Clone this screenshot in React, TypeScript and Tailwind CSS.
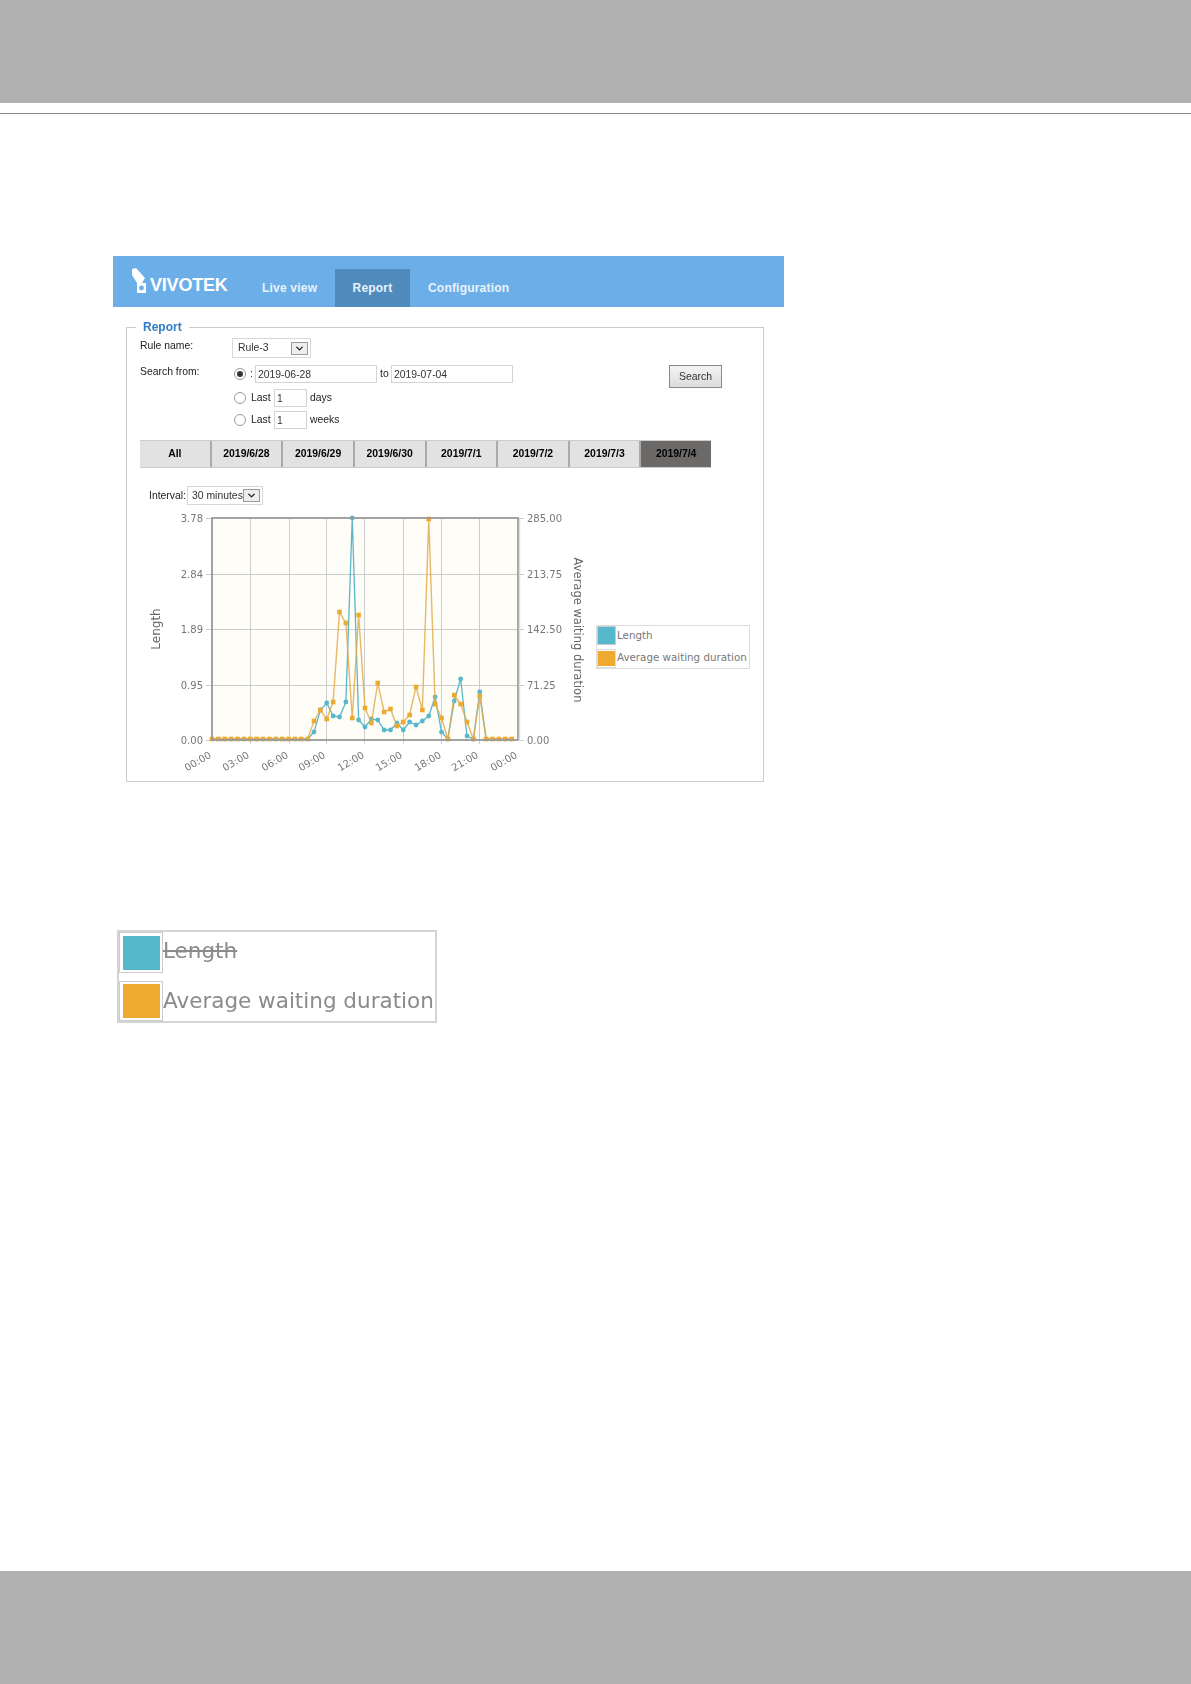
import React from 'react';
import { ChevronDown } from 'lucide-react';

const dates = ['All', '2019/6/28', '2019/6/29', '2019/6/30', '2019/7/1', '2019/7/2', '2019/7/3', '2019/7/4'];
const BASE = 739;

// page y of every half hour sample, index 0 is 00:00
const lengthY: Record<number, number> = {
  16: 732, 17: 710, 18: 703, 19: 716, 20: 717, 21: 702, 22: 518, 23: 720, 24: 727, 25: 719, 26: 720, 27: 730,
  28: 730, 29: 723, 30: 730, 31: 722, 32: 725, 33: 721, 34: 716, 35: 697, 36: 732, 37: 739, 38: 701, 39: 679,
  40: 736, 41: 739, 42: 692,
};
const waitY: Record<number, number> = {
  16: 721, 17: 710, 18: 719, 19: 702, 20: 612, 21: 623, 22: 718, 23: 615, 24: 708, 25: 723, 26: 683, 27: 712,
  28: 709, 29: 726, 30: 722, 31: 715, 32: 687, 33: 710, 34: 519, 35: 704, 36: 718, 37: 739, 38: 695, 39: 704,
  40: 722, 41: 739, 42: 696,
};

const samples = Array.from({ length: 48 }, (_, i) => i);
const px = (i: number) => 212 + i * 6.375;
const toPoints = (ys: Record<number, number>) => samples.map((i) => `${px(i)},${ys[i] ?? BASE}`).join(' ');

const gridX = [250.5, 289.5, 326.5, 364.5, 403.5, 441.5, 479.5];
const gridY = [574.5, 629.5, 685.5];
const leftTicks = [
  { y: 518, t: '3.78' },
  { y: 574, t: '2.84' },
  { y: 629, t: '1.89' },
  { y: 685, t: '0.95' },
  { y: 740, t: '0.00' },
];
const rightTicks = [
  { y: 518, t: '285.00' },
  { y: 574, t: '213.75' },
  { y: 629, t: '142.50' },
  { y: 685, t: '71.25' },
  { y: 740, t: '0.00' },
];
const hours = [
  { x: 212, t: '00:00' },
  { x: 250, t: '03:00' },
  { x: 289, t: '06:00' },
  { x: 326, t: '09:00' },
  { x: 365, t: '12:00' },
  { x: 403, t: '15:00' },
  { x: 442, t: '18:00' },
  { x: 479, t: '21:00' },
  { x: 518, t: '00:00' },
];

function Chart() {
  return (
    <svg width={610} height={272} viewBox="140 505 610 272" className="block">
      <g fontFamily="'DejaVu Sans', sans-serif" fontSize={10} fill="#777">
        <rect x={212} y={518} width={306} height={222} fill="#fffdf8" />
        {gridX.map((x) => <line key={x} x1={x} x2={x} y1={518} y2={744} stroke="#ccc" />)}
        {gridY.map((y) => <line key={y} x1={206} x2={524} y1={y} y2={y} stroke="#ccc" />)}
        <line x1={206} x2={212} y1={518.5} y2={518.5} stroke="#ccc" />
        <line x1={206} x2={212} y1={740.5} y2={740.5} stroke="#ccc" />
        <line x1={518} x2={524} y1={518.5} y2={518.5} stroke="#ccc" />
        <line x1={518} x2={524} y1={740.5} y2={740.5} stroke="#ccc" />

        <polyline points={toPoints(lengthY)} fill="none" stroke="#5ab7c9" strokeWidth={1.3} />
        {samples.filter((i) => lengthY[i]).map((i) => <circle key={i} cx={px(i)} cy={lengthY[i]} r={2.4} fill="#55b8cb" />)}
        <polyline points={toPoints(waitY)} fill="none" stroke="#e3ab4c" strokeOpacity={0.85} strokeWidth={1.4} />
        {samples.map((i) => (
          <rect key={i} x={px(i) - 2.3} y={(waitY[i] ?? BASE) - 2.3} width={4.6} height={4.6} fill="#edaa2f" />
        ))}

        <rect x={212} y={518} width={306} height={222} fill="none" stroke="#999" strokeWidth={1.8} />
        <line x1={519.5} x2={519.5} y1={519} y2={741} stroke="#ddd" strokeWidth={1.5} />

        {leftTicks.map((k) => <text key={k.t} x={203} y={k.y + 3.5} textAnchor="end">{k.t}</text>)}
        {rightTicks.map((k) => <text key={k.t} x={527} y={k.y + 3.5}>{k.t}</text>)}
        {hours.map((h, i) => (
          <text key={i} x={h.x} y={757} textAnchor="end" transform={`rotate(-30 ${h.x} 757)`}>{h.t}</text>
        ))}

        <text x={160} y={629} fontSize={12} fill="#666" textAnchor="middle" transform="rotate(-90 160 629)">Length</text>
        <text x={574} y={630} fontSize={11.5} fill="#666" textAnchor="middle" transform="rotate(90 574 630)">Average waiting duration</text>

        <rect x={596.5} y={625.5} width={153} height={43} fill="#fff" stroke="#ddd" />
        <rect x={597.5} y={626.5} width={18} height={18} fill="#fff" stroke="#ccc" />
        <rect x={598} y={627} width={17} height={17} fill="#55b8cb" />
        <rect x={597.5} y={649.5} width={18} height={18} fill="#fff" stroke="#ddd" />
        <rect x={598} y={651} width={17} height={15} fill="#edaa2f" />
        <text x={617} y={639} fontSize={10.3}>Length</text>
        <text x={617} y={661} fontSize={10.3}>Average waiting duration</text>
      </g>
    </svg>
  );
}

function FakeSelect({ label, className }: { label: string; className: string }) {
  return (
    <div className={`flex items-center justify-between whitespace-nowrap border border-[#d8d8d8] bg-white text-[10.4px] text-[#333] ${className}`}>
      <span>{label}</span>
      <span className="flex h-[13px] w-[17px] shrink-0 items-center justify-center border border-[#999] bg-[#eee]">
        <ChevronDown size={11} strokeWidth={3} color="#222" />
      </span>
    </div>
  );
}

function Radio({ checked }: { checked?: boolean }) {
  return (
    <span className="flex h-[12px] w-[12px] shrink-0 items-center justify-center rounded-full border border-[#999] bg-white">
      {checked && <span className="h-[6px] w-[6px] rounded-full bg-[#333]" />}
    </span>
  );
}

function TextBox({ value, className }: { value: string; className: string }) {
  return (
    <input
      readOnly
      value={value}
      className={`h-[18px] border border-[#d4d4d4] bg-white px-[2px] text-[10.4px] text-[#333] outline-none ${className}`}
    />
  );
}

export default function App() {
  return (
    <div className="flex min-h-[1684px] flex-col bg-white font-['Liberation_Sans',Arial,sans-serif]">
      <div className="h-[103px] bg-[#b0b0b0]" />
      <div className="mt-[10px] h-px bg-[#8c8c8c]" />

      {/* NAV BAR */}
      <div className="mt-[142px] ml-[113px] flex h-[51px] w-[671px] bg-[#6caee8]">
        <div className="relative w-[131px]">
          <svg width={34} height={30} viewBox="0 0 34 30" className="absolute left-[16px] top-[11px]">
            <path d="M3 2 L7 1 L16 11 L13 16 L8 16 L3 8 Z" fill="#fff" />
            <rect x={8} y={16} width={9} height={10} fill="#fff" />
            <circle cx={12.5} cy={21} r={2.4} fill="#6caee8" />
          </svg>
          <span className="absolute left-[37px] top-[18px] text-[18px] leading-[22px] font-bold tracking-[-0.2px] text-white">VIVOTEK</span>
        </div>
        <div className="mt-auto flex h-[38px] items-center text-[12px] font-bold tracking-[0.2px] text-[#e9f2fb]">
          <span className="ml-[18px] w-[73px]">Live view</span>
          <span className="flex h-full w-[75px] items-center justify-center bg-[#4f8bbd]">Report</span>
          <span className="ml-[18px]">Configuration</span>
        </div>
      </div>

      {/* REPORT PANEL */}
      <fieldset className="mt-[13px] ml-[126px] h-[462px] w-[638px] min-w-0 border border-[#ccc] px-[13px] blur-[0.3px]">
        <legend className="-ml-[4px] px-[7px] text-[12px] leading-[14px] font-bold text-[#2f7dc4]">Report</legend>

        <div className="mt-[4px] flex h-[20px] text-[10.4px] text-[#222]">
          <span className="w-[92px] leading-[16px]">Rule name:</span>
          <FakeSelect label="Rule-3" className="w-[79px] pr-[2px] pl-[5px]" />
        </div>

        <div className="mt-[7px] flex pr-[28px] text-[10.4px] text-[#222]">
          <span className="w-[92px] leading-[14px]">Search from:</span>
          <div className="flex flex-col">
            <div className="flex h-[18px] items-center">
              <span className="ml-[2px]"><Radio checked /></span>
              <span className="ml-[4px] w-[5px]">:</span>
              <TextBox value="2019-06-28" className="w-[122px]" />
              <span className="ml-[3px] w-[11px]">to</span>
              <TextBox value="2019-07-04" className="w-[122px]" />
            </div>
            <div className="mt-[6px] flex h-[18px] items-center">
              <span className="ml-[2px]"><Radio /></span>
              <span className="ml-[5px] w-[23px]">Last</span>
              <TextBox value="1" className="w-[33px]" />
              <span className="ml-[3px]">days</span>
            </div>
            <div className="mt-[4px] flex h-[18px] items-center">
              <span className="ml-[2px]"><Radio /></span>
              <span className="ml-[5px] w-[23px]">Last</span>
              <TextBox value="1" className="w-[33px]" />
              <span className="ml-[3px]">weeks</span>
            </div>
          </div>
          <button className="ml-auto h-[23px] w-[53px] self-start border border-[#888] bg-gradient-to-b from-[#f4f4f4] to-[#dcdcdc] text-[10.4px] text-[#333]">
            Search
          </button>
        </div>

        <div className="mt-[11px] flex h-[28px] w-[571px] border-y border-[#ccc]">
          {dates.map((d, i) => (
            <div
              key={d}
              className={`flex flex-1 items-center justify-center border-l-2 border-[#aaa] text-[10.4px] font-bold text-black first:border-l-0 ${i === 7 ? 'bg-[#6c6969]' : 'bg-[#e2e2e2]'}`}
            >
              {d}
            </div>
          ))}
        </div>

        <div className="mt-[18px] ml-[9px] flex h-[19px] items-center text-[10.4px] text-[#222]">
          <span className="w-[38px] whitespace-nowrap">Interval:</span>
          <FakeSelect label="30 minutes" className="h-[19px] w-[76px] pr-[2px] pl-[4px]" />
        </div>

        <Chart />
      </fieldset>

      {/* LEGEND CLOSE-UP */}
      <div className="mt-[148px] ml-[117px] flex w-[320px] flex-col border-2 border-[#d4d4d4] text-[21.5px] text-[#8b8b8b] blur-[0.5px] font-['DejaVu_Sans',sans-serif]">
        <div className="flex h-[47px] items-start">
          <span className="flex h-[41px] w-[44px] shrink-0 items-center justify-center border border-[#ccc]">
            <span className="h-[34px] w-[37px] bg-[#55b8cb]" />
          </span>
          <span className="line-through leading-[38px]">Length</span>
        </div>
        <div className="flex h-[42px] items-end">
          <span className="flex h-[40px] w-[44px] shrink-0 items-center justify-center border border-[#ccc]">
            <span className="h-[34px] w-[37px] bg-[#edaa2f]" />
          </span>
          <span className="whitespace-nowrap leading-[40px]">Average waiting duration</span>
        </div>
      </div>

      <div className="mt-auto h-[113px] bg-[#b0b0b0]" />
    </div>
  );
}
